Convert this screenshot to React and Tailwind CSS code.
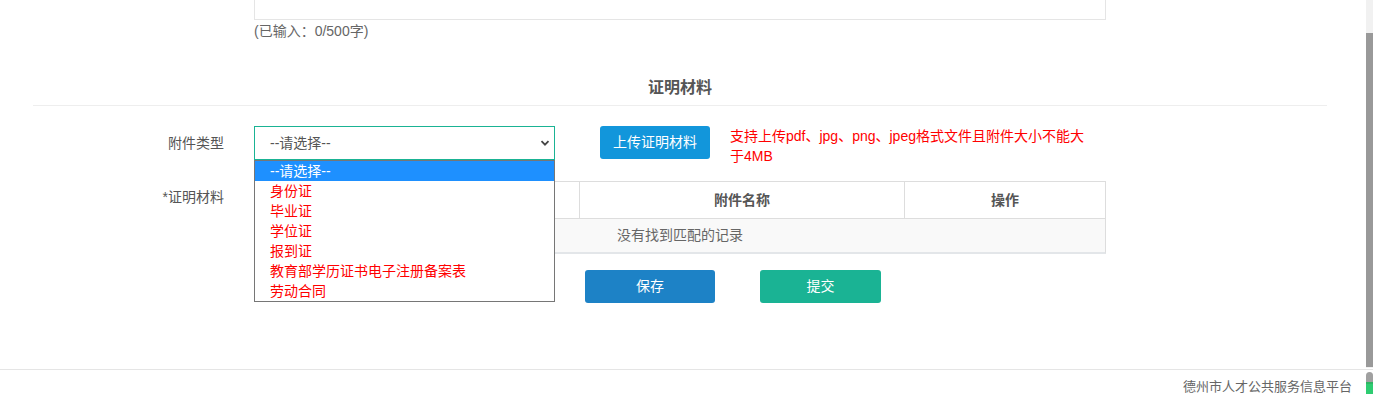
import React from "react";

const options = [
  "身份证",
  "毕业证",
  "学位证",
  "报到证",
  "教育部学历证书电子注册备案表",
  "劳动合同",
];

const Chevron = () => (
  <svg width="10" height="10" viewBox="0 0 10 10" className="text-[#444]">
    <path d="M1.5 3.2 L5 6.7 L8.5 3.2" fill="none" stroke="currentColor" strokeWidth="1.8" />
  </svg>
);

export default function App() {
  return (
    <div
      className="relative w-full h-[394px] overflow-hidden bg-white text-[14px] text-[#666]"
      style={{ fontFamily: '"Liberation Sans", "Noto Sans CJK SC", sans-serif' }}
    >
      <div className="pr-[7px]">
        {/* textarea tail */}
        <div className="ml-[254px] w-[852px] h-[20px] border border-t-0 border-[#e5e5e5]"></div>
        <div className="ml-[254px] mt-px leading-[20px]">(已输入：0/500字)</div>

        {/* section title */}
        <div className="ml-[33px] mr-[39px] mt-[36px]">
          <div className="text-center text-[16px] leading-[22px] font-bold text-[#555]">证明材料</div>
          <div className="mt-[6px] border-t border-[#eeeeee]"></div>
        </div>

        {/* row 1 */}
        <div className="relative flex items-start h-[34px] mt-[20px]">
          <div className="w-[224px] text-right leading-[34px] text-[#555]">附件类型</div>
          <div className="ml-[30px] w-[301px] h-[34px] border border-[#1ab394] flex items-center justify-between pl-[15px] pr-[4px] text-[#555]">
            <span>--请选择--</span>
            <Chevron />
          </div>
          <button className="ml-[45px] w-[110px] h-[33px] rounded-[3px] bg-[#1296db] text-white">
            上传证明材料
          </button>
          <div className="ml-[20px] w-[362px] leading-[20px] text-[#ff0000]">
            支持上传pdf、jpg、png、jpeg格式文件且附件大小不能大于4MB
          </div>

          {/* open dropdown list */}
          <div className="absolute left-[254px] top-[34px] z-10 w-[301px] border border-[#767676] bg-white">
            <div className="h-[20px] leading-[20px] pl-[15px] bg-[#1e90ff] text-white">--请选择--</div>
            {options.map((o) => (
              <div key={o} className="h-[20px] leading-[20px] pl-[15px] text-[#ff0000]">
                {o}
              </div>
            ))}
          </div>
        </div>

        {/* row 2 */}
        <div className="flex items-start mt-[21px]">
          <div className="w-[224px] text-right pt-[6px] leading-[20px] text-[#555]">*证明材料</div>
          <div className="ml-[30px] w-[852px] border border-[#dddddd] border-b-[#e3e6e9] border-b-2">
            <div className="grid grid-cols-[325px_325px_1fr] h-[36px] font-bold text-[#555]">
              <div className="border-r border-[#dddddd]"></div>
              <div className="border-r border-[#dddddd] flex items-center justify-center">附件名称</div>
              <div className="flex items-center justify-center">操作</div>
            </div>
            <div className="h-[34px] border-t border-[#dddddd] bg-[#f9f9f9] flex items-center justify-center">
              没有找到匹配的记录
            </div>
          </div>
        </div>

        {/* actions */}
        <div className="flex gap-[45px] ml-[585px] mt-[16px]">
          <button className="w-[130px] h-[33px] rounded-[3px] bg-[#1d82c6] text-white">保存</button>
          <button className="w-[121px] h-[33px] rounded-[3px] bg-[#1ab394] text-white">提交</button>
        </div>
      </div>

      {/* footer */}
      <div className="mt-[66px] border-t border-[#e5e5e5] pr-[21px] pt-[7px] text-right text-[13px] leading-[20px] text-[#666]">
        德州市人才公共服务信息平台
      </div>

      {/* page scrollbar */}
      <div className="absolute right-0 top-0 w-[7px] h-[368px] bg-[#f1f1f1]">
        <div className="mt-[33px] h-[334px] bg-[#999999]"></div>
      </div>
      <div className="absolute right-0 top-[372px] w-[7px] h-[22px] flex flex-col overflow-hidden rounded-t-full">
        <div className="h-[10px] bg-[#a0a0a0]"></div>
        <div className="h-[2px] bg-[#2fb463]"></div>
        <div className="flex-1 bg-[#2ecc71]"></div>
      </div>
    </div>
  );
}
